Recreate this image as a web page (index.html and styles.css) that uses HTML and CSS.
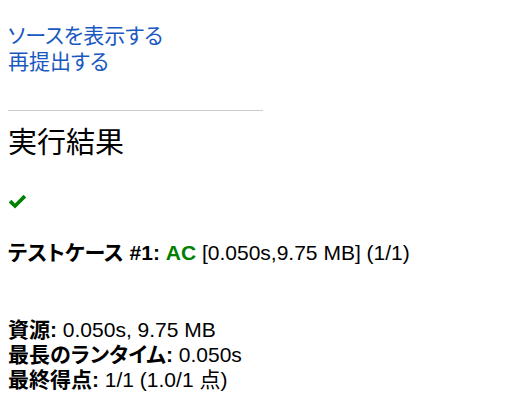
FILE: index.html
```html
<!DOCTYPE html>
<html lang="ja">
<head>
<meta charset="utf-8">
<link rel="stylesheet" href="styles.css">
</head>
<body>
<div class="links">
  <a href="#">ソースを表示する</a>
  <a href="#">再提出する</a>
</div>
<hr class="sep">
<h2 class="title">実行結果</h2>
<div class="check"><svg width="20" height="16" viewBox="0 0 20 16"><path d="M1.2 2.8 Q0.6 3.4 1.2 4 Z" fill="none"/><path d="M0.8 8.4 L3.4 5.8 L7 9.4 L15.6 0.8 L18.2 3.4 L7 14.6 Z" fill="#008000"/></svg></div>
<div class="case"><b>テストケース #1:</b> <span class="ac">AC</span> [0.050s,9.75 MB] (1/1)</div>
<div class="summary">
  <div><b>資源:</b> 0.050s, 9.75 MB</div>
  <div><b>最長のランタイム:</b> 0.050s</div>
  <div><b>最終得点:</b> 1/1 (1.0/1 点)</div>
</div>
</body>
</html>
```
FILE: styles.css
```css
html, body { margin: 0; padding: 0; background: #fff; }
body {
  padding: 23px 8px 0 8px;
  font-family: "Liberation Sans", "Noto Sans CJK JP", sans-serif;
  font-size: 21px;
  font-feature-settings: "palt";
  color: #000;
}
.links { display: flex; flex-direction: column; line-height: 26px; align-items: flex-start; }
.links a { color: #1958c1; text-decoration: none; }
.sep { width: 255px; margin: 35px 0 0 0; border: 0; border-top: 1px solid #ccc; height: 0; }
.title { font-weight: normal; font-size: 29px; margin: 12px 0 0 0; line-height: 40px; font-feature-settings: normal; }
.check { margin-top: 31px; height: 16px; display: flex; }
.case { margin-top: 30px; line-height: 26px; }
.ac { color: #008000; font-weight: bold; }
.summary { margin-top: 51px; line-height: 25px; }
```
